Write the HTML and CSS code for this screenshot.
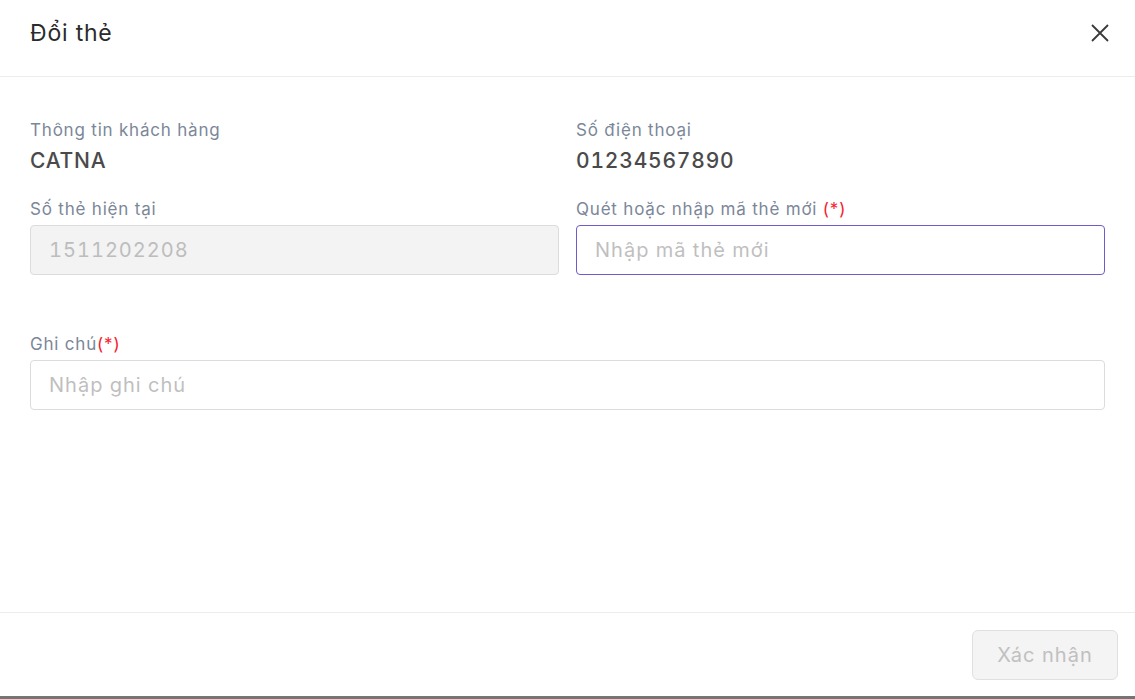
FILE: index.html
```html
<!DOCTYPE html>
<html lang="vi">
<head>
    <meta charset="UTF-8">
    <meta name="viewport" content="width=device-width, initial-scale=1.0">
    <title>Đổi thẻ</title>
    <link rel="stylesheet" href="styles.css">
</head>
<body>
    <div class="modal">
        <div class="modal-header">
            <h1 class="modal-title">Đổi thẻ</h1>
            <button class="close-btn" aria-label="Đóng">
                <svg width="18" height="18" viewBox="0 0 18 18">
                    <path d="M1 1 L17 17 M17 1 L1 17" stroke="#3a3a3a" stroke-width="1.8" fill="none"/>
                </svg>
            </button>
        </div>

        <div class="modal-body">
            <div class="info-grid">
                <div class="field">
                    <div class="label">Thông tin khách hàng</div>
                    <div class="value">CATNA</div>
                </div>
                <div class="field">
                    <div class="label">Số điện thoại</div>
                    <div class="value">01234567890</div>
                </div>
                <div class="field">
                    <div class="label">Số thẻ hiện tại</div>
                    <input class="text-input" type="text" value="1511202208" disabled>
                </div>
                <div class="field">
                    <div class="label">Quét hoặc nhập mã thẻ mới <span class="required">(*)</span></div>
                    <input class="text-input focused" type="text" placeholder="Nhập mã thẻ mới">
                </div>
            </div>

            <div class="field note-field">
                <div class="label">Ghi chú<span class="required">(*)</span></div>
                <input class="text-input" type="text" placeholder="Nhập ghi chú">
            </div>
        </div>

        <div class="modal-footer">
            <button class="submit-btn" disabled>Xác nhận</button>
        </div>
    </div>
</body>
</html>
```

FILE: styles.css
```css
html {
    background-color: #757575;
}
body {
    margin: 0;
    font-family: Inter, "Noto Sans", sans-serif;
    letter-spacing: 0.05em;
}
.modal {
    height: 696px;
    background-color: white;
    display: flex;
    flex-direction: column;
}
.modal-header {
    height: 77px;
    box-sizing: border-box;
    border-bottom: 1px solid #ececec;
    display: flex;
    align-items: center;
    justify-content: space-between;
    padding: 0 26px 10px 30px;
}
.modal-title {
    margin: 0;
    font-size: 23px;
    font-weight: 400;
    color: #2b2b2b;
}
.close-btn {
    border: none;
    background: none;
    padding: 0;
    cursor: pointer;
    display: flex;
}
.modal-body {
    flex: 1;
    padding: 42px 30px 0 30px;
}
.info-grid {
    display: grid;
    grid-template-columns: 1fr 1fr;
    column-gap: 17px;
    row-gap: 22px;
}
.label {
    font-size: 17px;
    line-height: 22px;
    color: #7b8799;
    margin-bottom: 5px;
}
.value {
    font-size: 21px;
    font-weight: 500;
    line-height: 30px;
    color: #4a4a4a;
    font-variant-numeric: tabular-nums;
}
.required {
    color: #f5222d;
}
.text-input {
    display: block;
    width: 100%;
    box-sizing: border-box;
    height: 50px;
    padding: 0 18px;
    border: 1px solid #dcdcdc;
    border-radius: 4px;
    font-family: Inter, "Noto Sans", sans-serif;
    font-size: 20px;
    letter-spacing: 0.05em;
    font-variant-numeric: tabular-nums;
    color: #333;
    background-color: white;
    outline: none;
}
.text-input::placeholder {
    color: #bfbfbf;
}
.text-input:disabled {
    background-color: #f3f3f3;
    color: #bdbdbd;
}
.text-input.focused {
    border-color: #6e5ccf;
}
.note-field {
    margin-top: 58px;
}
.modal-footer {
    border-top: 1px solid #ececec;
    padding: 17px 17px 16px 0;
    display: flex;
    justify-content: flex-end;
}
.submit-btn {
    width: 146px;
    height: 50px;
    border: 1px solid #e0e0e0;
    border-radius: 6px;
    background-color: #f4f4f4;
    color: #c0c0c0;
    font-family: Inter, "Noto Sans", sans-serif;
    font-size: 20px;
    letter-spacing: 0.05em;
}
```
